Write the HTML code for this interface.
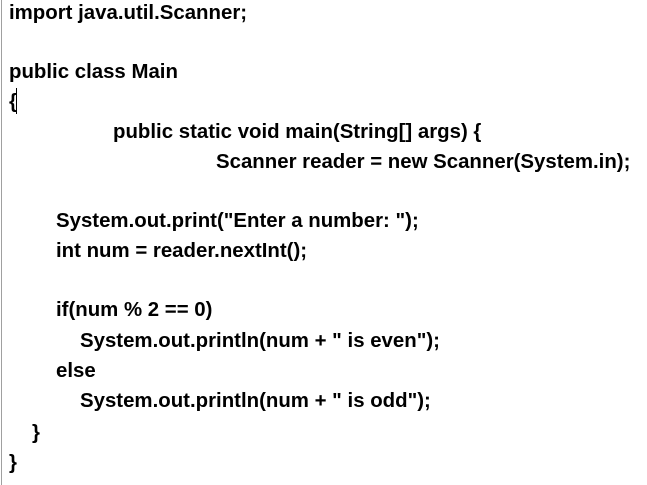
<!DOCTYPE html>
<html><head><style>
html,body{margin:0;padding:0;background:#fff;width:647px;height:485px;overflow:hidden;position:relative}
#b{position:absolute;left:1px;top:0;width:1px;height:485px;background:#a0a0a0}
#c{position:absolute;left:16px;top:88px;width:1px;height:26px;background:#000}
.l{position:absolute;font-family:"Liberation Sans",sans-serif;font-weight:bold;font-size:20px;line-height:24px;color:#000;white-space:pre;transform:scaleX(1.02);transform-origin:0 0}
</style></head><body>
<div id="b"></div><div id="c"></div>
<div class="l" style="left:9px;top:1px">import java.util.Scanner;</div>
<div class="l" style="left:9px;top:60px">public class Main</div>
<div class="l" style="left:9px;top:90px">{</div>
<div class="l" style="left:113px;top:120px">public static void main(String[] args) {</div>
<div class="l" style="left:216px;top:150px">Scanner reader = new Scanner(System.in);</div>
<div class="l" style="left:56px;top:209px">System.out.print("Enter a number: ");</div>
<div class="l" style="left:56px;top:239px">int num = reader.nextInt();</div>
<div class="l" style="left:56px;top:298px">if(num % 2 == 0)</div>
<div class="l" style="left:80px;top:329px">System.out.println(num + " is even");</div>
<div class="l" style="left:56px;top:359px">else</div>
<div class="l" style="left:80px;top:389px">System.out.println(num + " is odd");</div>
<div class="l" style="left:32px;top:421px">}</div>
<div class="l" style="left:9px;top:451px">}</div>
</body></html>
